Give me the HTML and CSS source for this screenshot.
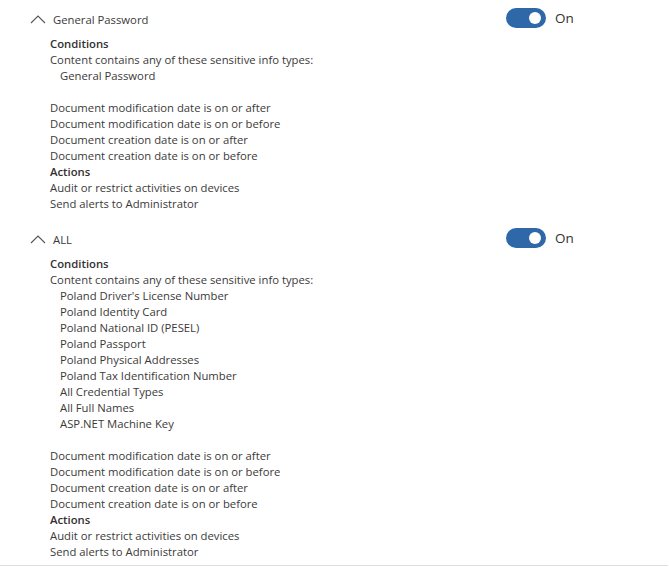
FILE: index.html
```html
<!DOCTYPE html>
<html lang="en">

    <head>
        <meta charset="UTF-8">
        <meta name="viewport" content="width=device-width, initial-scale=1.0">
        <title>Policy rules</title>

        <link rel="stylesheet" href="styles.css">

    </head>

    <body>
        <div class="rules">

            <div class="rule">
                <div class="rule-header">
                    <svg class="chevron" width="16" height="10" viewBox="0 0 16 10">
                        <path d="M1 9 L8 2 L15 9" fill="none" stroke="#555" stroke-width="1.1" />
                    </svg>
                    <span class="rule-name">General Password</span>
                    <div class="toggle">
                        <span class="toggle-track"><span class="toggle-thumb"></span></span>
                        <span class="toggle-label">On</span>
                    </div>
                </div>
                <div class="rule-body">
                    <div class="heading">Conditions</div>
                    <div>Content contains any of these sensitive info types:</div>
                    <ul class="types">
                        <li>General Password</li>
                    </ul>
                    <div class="spacer"></div>
                    <div>Document modification date is on or after</div>
                    <div>Document modification date is on or before</div>
                    <div>Document creation date is on or after</div>
                    <div>Document creation date is on or before</div>
                    <div class="heading">Actions</div>
                    <div>Audit or restrict activities on devices</div>
                    <div>Send alerts to Administrator</div>
                </div>
            </div>

            <div class="rule">
                <div class="rule-header">
                    <svg class="chevron" width="16" height="10" viewBox="0 0 16 10">
                        <path d="M1 9 L8 2 L15 9" fill="none" stroke="#555" stroke-width="1.1" />
                    </svg>
                    <span class="rule-name">ALL</span>
                    <div class="toggle">
                        <span class="toggle-track"><span class="toggle-thumb"></span></span>
                        <span class="toggle-label">On</span>
                    </div>
                </div>
                <div class="rule-body">
                    <div class="heading">Conditions</div>
                    <div>Content contains any of these sensitive info types:</div>
                    <ul class="types">
                        <li>Poland Driver's License Number</li>
                        <li>Poland Identity Card</li>
                        <li>Poland National ID (PESEL)</li>
                        <li>Poland Passport</li>
                        <li>Poland Physical Addresses</li>
                        <li>Poland Tax Identification Number</li>
                        <li>All Credential Types</li>
                        <li>All Full Names</li>
                        <li>ASP.NET Machine Key</li>
                    </ul>
                    <div class="spacer"></div>
                    <div>Document modification date is on or after</div>
                    <div>Document modification date is on or before</div>
                    <div>Document creation date is on or after</div>
                    <div>Document creation date is on or before</div>
                    <div class="heading">Actions</div>
                    <div>Audit or restrict activities on devices</div>
                    <div>Send alerts to Administrator</div>
                </div>
            </div>

        </div>
    </body>

</html>
```

FILE: styles.css
```css
* {
    margin: 0;
    padding: 0;
    box-sizing: border-box;
}

body {
    font-family: 'Open Sans', 'Liberation Sans', sans-serif;
    font-size: 11.3px;
    line-height: 16px;
    background-color: #fff;
    color: #3b3a39;
}

.rules {
    padding-top: 9px;
    border-bottom: 1px solid #e1dfdd;
    padding-bottom: 5px;
    margin-right: 1px;
}

.rule + .rule {
    margin-top: 17px;
}

.rule-header {
    display: flex;
    align-items: center;
    height: 20px;
}

.chevron {
    margin-left: 30px;
    margin-top: -1px;
}

.rule-name {
    margin-left: 7px;
    margin-top: 2px;
    color: #3b3a39;
}

.toggle {
    display: flex;
    align-items: center;
    margin-left: auto;
    width: 162px;
    margin-top: -2px;
}

.toggle-track {
    position: relative;
    width: 40px;
    height: 20px;
    border-radius: 10px;
    background-color: #2f68a9;
}

.toggle-thumb {
    position: absolute;
    top: 4px;
    right: 5px;
    width: 12px;
    height: 12px;
    border-radius: 50%;
    background-color: #fff;
}

.toggle-label {
    margin-left: 9px;
    font-size: 13.5px;
    color: #323130;
}

.rule-body {
    margin-top: 7px;
    padding-left: 50px;
}

.heading {
    font-weight: 600;
    color: #323130;
}

.types {
    list-style-type: none;
    padding-left: 10px;
}

.spacer {
    height: 16px;
}
```
